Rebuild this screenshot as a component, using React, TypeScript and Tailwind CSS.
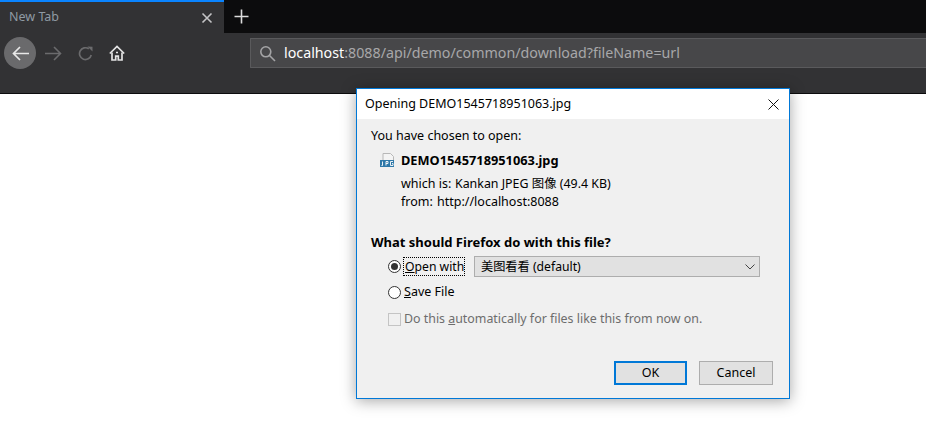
import React from "react";

const ui = { fontFamily: '"Noto Sans", "Noto Sans CJK SC", sans-serif' };

function Radio({ on }: { on?: boolean }) {
  return (
    <span className="flex h-[13px] w-[13px] shrink-0 items-center justify-center rounded-full border border-[#333] bg-white">
      {on && <span className="h-[7px] w-[7px] rounded-full bg-[#333]" />}
    </span>
  );
}

export default function App() {
  return (
    <div className="relative h-[428px] w-[926px] overflow-hidden bg-white" style={ui}>
      <div className="flex h-[33px] bg-[#0c0c0d]">
        <div className="flex w-[224px] items-center justify-between border-t-2 border-[#0a84ff] bg-[#323234] pl-[9px] pr-[11px]">
          <span className="text-[12.5px] text-[#8f9aa3]">New Tab</span>
          <svg width="12" height="12" viewBox="0 0 12 12" fill="none" stroke="#c4c4c6" strokeWidth="1.6"><path d="M1.500 1.500l9 9M10.500 1.500l-9 9" /></svg>
        </div>
        <div className="flex w-[34px] items-center justify-center">
          <svg width="15" height="15" viewBox="0 0 15 15" fill="none" stroke="#dcdcdc" strokeWidth="1.6"><path d="M7.500 0.500v14M0.500 7.500h14" /></svg>
        </div>
      </div>
      <div className="flex h-[61px] items-start border-b border-[#0c0c0d] bg-[#323234] pl-1 pt-[4px]">
        <div className="flex h-8 w-8 items-center justify-center rounded-full bg-[#6a6a6c]">
          <svg width="17" height="15" viewBox="0 0 17 15" fill="none" stroke="#e8e8e8" strokeWidth="1.7"><path d="M1.500 7.500h15.500M8 1L1.500 7.500 8 14" /></svg>
        </div>
        <div className="ml-[9px] mt-[9px]">
          <svg width="17" height="15" viewBox="0 0 17 15" fill="none" stroke="#6b6b6d" strokeWidth="1.6"><path d="M0 7.500h15.500M9 1l6.500 6.500L9 14" /></svg>
        </div>
        <div className="ml-[16px] mt-[9px]">
          <svg width="15" height="15" viewBox="0 0 15 15" fill="none" stroke="#6b6b6d" strokeWidth="1.7"><path d="M13.200 9A5.900 5.900 0 1 1 10.800 2.800" /><path d="M9.500 0.500l5 .2v4.800z" fill="#6b6b6d" stroke="none" /></svg>
        </div>
        <div className="ml-[16px] mt-[8px]">
          <svg width="16" height="16" viewBox="0 0 16 16" fill="none" stroke="#e4e4e4" strokeWidth="1.700"><path d="M.8 8.500L8 1.500l7.200 7" /><path d="M3 7.500v7.500h3.700v-3.800h2.600V15H13V7.500" /><path d="M7 7.500h2" /></svg>
        </div>
        <div className="ml-[125px] mt-[1px] flex h-[30px] flex-1 items-center rounded-l-[1px] border border-r-0 border-[#5a5a5c] bg-[#474749] pl-[8px]">
          <svg width="17" height="17" viewBox="0 0 17 17" fill="none" stroke="#a4a4a6" strokeWidth="1.6"><circle cx="6.800" cy="6.800" r="5" /><path d="M10.500 10.500l5.500 5.500" /></svg>
          <span className="ml-[8px] text-[14.25px] text-[#a8a8aa]"><span className="text-white">localhost</span>:8088/api/demo/common/download?fileName=url</span>
        </div>
      </div>

      <div className="absolute left-[356px] top-[88px] flex h-[311px] w-[434px] flex-col border border-[#0078d7] bg-[#f0f0f0] text-[12.5px] text-black shadow-[0_2px_14px_rgba(0,0,0,0.35)]">
        <div className="flex h-[30px] items-center justify-between bg-white pl-2 pr-[10px]">
          <span>Opening DEMO1545718951063.jpg</span>
          <svg width="11" height="11" viewBox="0 0 11 11" fill="none" stroke="#111" strokeWidth="1"><path d="M.5.5l10 10M10.500.5l-10 10" /></svg>
        </div>
        <div className="flex flex-1 flex-col pl-[14px] pr-4">
          <div className="mt-[8px] h-[18px] leading-[18px]">You have chosen to open:</div>
          <div className="ml-[9px] mt-[7px] flex h-[18px] items-center">
            <svg width="15" height="16" viewBox="0 0 15 16"><path d="M3 .5h7.500l3 3V12H3z" fill="#f4f4f4" stroke="#b8b8b8" /><rect x="0" y="7" width="14" height="7" fill="#2f78a8" /><path d="M2.500 8.500v4H1.500M6 12.500v-4h2v2H6M13 8.500h-2.500v4H13v-2h-1" fill="none" stroke="#fff" strokeWidth="0.9" /></svg>
            <span className="ml-[6px] text-[12.8px] font-bold">DEMO1545718951063.jpg</span>
          </div>
          <div className="ml-[30px] mt-[6px] flex h-[17px] items-center"><span className="w-[54px]">which is:</span><span className="text-[12.4px]">Kankan JPEG 图像 (49.4 KB)</span></div>
          <div className="ml-[30px] flex h-[18px] items-center"><span className="w-[36px]">from:</span><span>http://localhost:8088</span></div>
          <div className="mt-[22px] h-[18px] text-[13px] font-bold leading-[18px]">What should Firefox do with this file?</div>
          <div className="ml-[17px] mt-[5px] flex h-[21px] items-center">
            <Radio on />
            <span className="ml-[2px] w-[62px] whitespace-nowrap border border-dotted border-black pl-[1px] text-[12.2px] leading-[17px]"><u>O</u>pen with</span>
            <div className="ml-[9px] flex h-[21px] w-[286px] items-center justify-between border border-[#adadad] bg-[#e1e1e1] pl-[6px] pr-[4px]">
              <span className="pt-[1px] text-[12.200px]">美图看看 (default)</span>
              <svg width="10" height="6" viewBox="0 0 10 6" fill="none" stroke="#444" strokeWidth="1"><path d="M.5.5L5 5 9.500.5" /></svg>
            </div>
          </div>
          <div className="ml-[17px] mt-[6px] flex h-[18px] items-center">
            <Radio />
            <span className="ml-[3px]"><u>S</u>ave File</span>
          </div>
          <div className="ml-[17px] mt-[9px] flex h-[18px] items-center text-[#6d6d6d]">
            <span className="h-[13px] w-[13px] shrink-0 border border-[#c4c4c4] bg-[#f0f0f0]" />
            <span className="ml-[3px] text-[12.4px]">Do this <u>a</u>utomatically for files like this from now on.</span>
          </div>
          <div className="mb-[13px] mt-auto flex justify-end gap-[12px]">
            <button className="h-[24px] w-[73px] border-2 border-[#0078d7] bg-[#e1e1e1]">OK</button>
            <button className="h-[24px] w-[74px] border border-[#adadad] bg-[#e1e1e1]">Cancel</button>
          </div>
        </div>
      </div>
    </div>
  );
}
